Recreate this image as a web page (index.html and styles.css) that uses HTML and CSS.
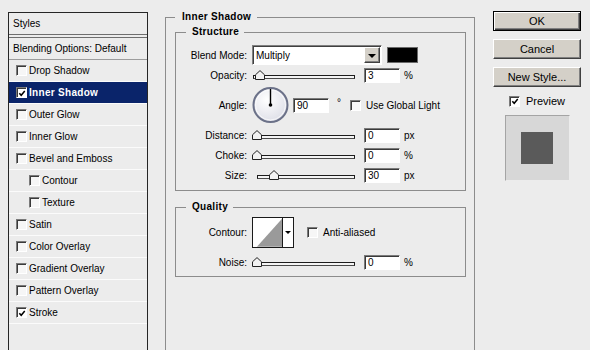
FILE: index.html
```html
<!DOCTYPE html>
<html lang="en">
<head>
<meta charset="UTF-8">
<title>Layer Style</title>
<link rel="stylesheet" href="styles.css">
</head>
<body>

<div class="dialog">

  <!-- Styles list -->
  <div class="styles-list">
    <div class="list-head">Styles</div>
    <div class="list-item blend">Blending Options: Default</div>
    <div class="list-item"><span class="check"></span>Drop Shadow</div>
    <div class="list-item selected"><span class="check on"><svg viewBox="0 0 9 9"><path d="M1.5 4.2 L3.6 6.5 L7.6 1.8"/></svg></span>Inner Shadow</div>
    <div class="list-item"><span class="check"></span>Outer Glow</div>
    <div class="list-item"><span class="check"></span>Inner Glow</div>
    <div class="list-item"><span class="check"></span>Bevel and Emboss</div>
    <div class="list-item sub"><span class="check"></span>Contour</div>
    <div class="list-item sub"><span class="check"></span>Texture</div>
    <div class="list-item"><span class="check"></span>Satin</div>
    <div class="list-item"><span class="check"></span>Color Overlay</div>
    <div class="list-item"><span class="check"></span>Gradient Overlay</div>
    <div class="list-item"><span class="check"></span>Pattern Overlay</div>
    <div class="list-item"><span class="check on"><svg viewBox="0 0 9 9"><path d="M1.5 4.2 L3.6 6.5 L7.6 1.8"/></svg></span>Stroke</div>
  </div>

  <!-- Settings -->
  <div class="settings">
    <fieldset class="group outer">
      <legend>Inner Shadow</legend>

      <fieldset class="group structure">
        <legend>Structure</legend>

        <div class="row first">
          <span class="label">Blend Mode:</span>
          <div class="select">Multiply<span class="arrow"></span></div>
          <span class="color-swatch"></span>
        </div>

        <div class="row">
          <span class="label">Opacity:</span>
          <div class="slider"><span class="track"></span><span class="thumb" style="left:2px"></span></div>
          <span class="field">3</span><span class="unit">%</span>
        </div>

        <div class="row angle">
          <span class="label">Angle:</span>
          <svg class="dial" width="38" height="40" viewBox="0 0 38 40">
            <defs>
              <radialGradient id="dialFill" cx="40%" cy="35%" r="70%">
                <stop offset="0" stop-color="#ffffff"/>
                <stop offset="1" stop-color="#dcdde6"/>
              </radialGradient>
            </defs>
            <circle cx="18.5" cy="20" r="17" fill="url(#dialFill)" stroke="#6b7188" stroke-width="2"/>
            <circle cx="18.5" cy="20" r="15" fill="none" stroke="#ffffff" stroke-width="1" opacity="0.7"/>
            <line x1="18.5" y1="20" x2="18.5" y2="4" stroke="#000" stroke-width="1.4"/>
            <circle cx="18.5" cy="20" r="1.8" fill="#000"/>
          </svg>
          <span class="field">90</span>
          <span class="degree">°</span>
          <span class="check global"></span><span class="check-text">Use Global Light</span>
        </div>

        <div class="row">
          <span class="label">Distance:</span>
          <div class="slider"><span class="track"></span><span class="thumb" style="left:-1px"></span></div>
          <span class="field">0</span><span class="unit">px</span>
        </div>

        <div class="row">
          <span class="label">Choke:</span>
          <div class="slider"><span class="track"></span><span class="thumb" style="left:-1px"></span></div>
          <span class="field">0</span><span class="unit">%</span>
        </div>

        <div class="row">
          <span class="label">Size:</span>
          <div class="slider short"><span class="track"></span><span class="thumb" style="left:16px"></span></div>
          <span class="field">30</span><span class="unit">px</span>
        </div>
      </fieldset>

      <fieldset class="group quality">
        <legend>Quality</legend>

        <div class="row contour-row">
          <span class="label">Contour:</span>
          <div class="contour">
            <svg class="curve" width="30" height="29" viewBox="0 0 30 29">
              <polygon points="4,29 30,0 30,29" fill="#9a9a9a"/>
            </svg>
            <span class="contour-arrow"></span>
          </div>
          <span class="check anti"></span><span class="check-text">Anti-aliased</span>
        </div>

        <div class="row noise">
          <span class="label">Noise:</span>
          <div class="slider"><span class="track"></span><span class="thumb" style="left:-1px"></span></div>
          <span class="field">0</span><span class="unit">%</span>
        </div>
      </fieldset>
    </fieldset>
  </div>

  <!-- Buttons and preview -->
  <div class="actions">
    <div class="btn default">OK</div>
    <div class="btn">Cancel</div>
    <div class="btn">New Style...</div>
    <div class="preview-toggle">
      <span class="check on"><svg viewBox="0 0 9 9"><path d="M1.5 4.2 L3.6 6.5 L7.6 1.8"/></svg></span>Preview
    </div>
    <div class="preview-box"><span class="preview-square"></span></div>
  </div>

</div>

</body>
</html>
```

FILE: styles.css
```css
/* Page */
body {
  margin: 0;
  background: #ececec;
  font-family: "Liberation Sans", Arial, sans-serif;
  font-size: 10px;
  color: #000;
}
.dialog {
  display: flex;
  align-items: flex-start;
  height: 350px;
  overflow: hidden;
}

/* Styles list */
.styles-list {
  flex: none;
  width: 140px;
  height: 400px;
  margin: 12px 0 0 8px;
  box-sizing: border-box;
  border: 1px solid #262626;
}
.list-head {
  height: 21px;
  line-height: 21px;
  padding-left: 4px;
  border-bottom: 1px solid #6e6e6e;
}
.list-item {
  display: flex;
  align-items: center;
  height: 21px;
  padding-left: 7px;
  border-bottom: 1px solid #fbfbfb;
}
.list-item.blend {
  margin-top: 2px;
  padding-left: 4px;
  border-top: 1px solid #6e6e6e;
  border-bottom-color: #9c9c9c;
}
.list-item.sub {
  padding-left: 20px;
}
.list-item.selected {
  background: #0a246a;
  color: #fff;
  font-weight: bold;
  letter-spacing: 0.3px;
}

/* Checkboxes */
.check {
  flex: none;
  display: inline-flex;
  align-items: center;
  justify-content: center;
  width: 11px;
  height: 11px;
  margin-right: 2px;
  box-sizing: border-box;
  border: 1px solid;
  border-color: #7a7a7a #fff #fff #7a7a7a;
  box-shadow: inset 1px 1px 0 #3a3a3a;
  background: #f6f6f6;
}
.check.on {
  background: #fff;
}
.check svg {
  width: 9px;
  height: 9px;
  margin: 1px 0 0 1px;
}
.check svg path {
  fill: none;
  stroke: #000;
  stroke-width: 1.7;
}
.check-text {
  margin-left: 5px;
}

/* Settings groups */
.settings {
  flex: none;
  width: 310px;
  margin: 11px 0 0 17px;
}
.group {
  margin: 0;
  padding: 0;
  min-width: 0;
  border: 1px solid #8c8c8c;
}
.group legend {
  font-weight: bold;
  line-height: 12px;
  letter-spacing: 0.3px;
}
.outer {
  box-sizing: border-box;
  width: 310px;
  height: 380px;
  padding: 0 8px 0 9px;
}
.outer > legend {
  padding: 0 6px 0 7px;
}
.structure {
  margin-top: 3px;
  padding-bottom: 5px;
}
.structure > legend,
.quality > legend {
  margin-left: 10px;
  padding: 0 5px 0 6px;
}
.quality {
  margin-top: 10px;
  padding-bottom: 4px;
}

/* Rows */
.row {
  display: flex;
  align-items: center;
  height: 20px;
}
.row.first {
  margin-top: 7px;
}
.row.angle {
  height: 40px;
}
.label {
  flex: none;
  width: 71px;
  margin-right: 5px;
  text-align: right;
}

/* Blend mode select */
.select {
  display: flex;
  align-items: center;
  box-sizing: border-box;
  width: 130px;
  height: 20px;
  padding-left: 3px;
  border: 1px solid;
  border-color: #808080 #fff #fff #808080;
  box-shadow: inset 1px 1px 0 #404040;
  background: #fff;
}
.select .arrow {
  display: flex;
  align-items: center;
  justify-content: center;
  box-sizing: border-box;
  width: 16px;
  height: 16px;
  margin-left: auto;
  margin-right: 1px;
  border: 1px solid;
  border-color: #fff #404040 #404040 #fff;
  box-shadow: inset -1px -1px 0 #808080;
  background: #d4d0c8;
}
.select .arrow::after {
  content: "";
  border-top: 4px solid #000;
  border-left: 4px solid transparent;
  border-right: 4px solid transparent;
  margin-top: 1px;
}
.color-swatch {
  width: 31px;
  height: 16px;
  margin-left: 5px;
  box-sizing: border-box;
  border: 1px solid #6a6a6a;
  background: #000;
}

/* Sliders */
.slider {
  position: relative;
  display: flex;
  align-items: center;
  width: 102px;
  height: 20px;
  margin-left: 1px;
}
.track {
  flex: 1;
  height: 2px;
  margin-top: 4px;
  border: 1px solid #1c1c1c;
  border-bottom-color: #4a4a4a;
  background: #f4f4f4;
}
.slider.short .track {
  margin-left: 4px;
}
.thumb {
  position: absolute;
  top: 5px;
  width: 10px;
  height: 10px;
  background: url("data:image/svg+xml,%3Csvg xmlns='http://www.w3.org/2000/svg' width='10' height='10'%3E%3Cpolygon points='0.5,9.5 0.5,4.8 5,0.6 9.5,4.8 9.5,9.5' fill='%23f2f2f2' stroke='%23222' stroke-width='1'/%3E%3C/svg%3E") no-repeat;
}

/* Number fields */
.field {
  box-sizing: border-box;
  width: 36px;
  height: 15px;
  margin-left: 9px;
  padding-left: 3px;
  line-height: 13px;
  border: 1px solid;
  border-color: #7b7b7b #fff #fff #7b7b7b;
  box-shadow: inset 1px 1px 0 #3a3a3a;
  background: #fff;
}
.unit {
  margin-left: 4px;
}
.dial {
  flex: none;
}
.row.angle .field {
  margin-left: 3px;
}
.degree {
  margin: 0 0 6px 8px;
}
.check.global {
  margin: 0 0 0 9px;
}

/* Quality */
.contour-row {
  height: 31px;
  margin-top: 4px;
}
.contour {
  display: flex;
  box-sizing: border-box;
  width: 42px;
  height: 31px;
  border: 1px solid #1a1a1a;
  background: #fff;
}
.contour-arrow {
  display: flex;
  align-items: center;
  justify-content: center;
  width: 10px;
  border-left: 1px solid #1a1a1a;
}
.contour-arrow::after {
  content: "";
  border-top: 3px solid #000;
  border-left: 3px solid transparent;
  border-right: 3px solid transparent;
}
.check.anti {
  margin: 0 0 0 13px;
}
.row.noise {
  margin-top: 4px;
}

/* Buttons and preview */
.actions {
  flex: none;
  display: flex;
  flex-direction: column;
  align-items: center;
  width: 88px;
  margin: 11px 0 0 18px;
}
.btn {
  box-sizing: border-box;
  width: 88px;
  height: 20px;
  margin-bottom: 8px;
  border: 1px solid;
  border-color: #fff #404040 #404040 #fff;
  box-shadow: inset -1px -1px 0 #808080;
  background: #d4d0c8;
  font-size: 11px;
  line-height: 18px;
  text-align: center;
}
.btn.default {
  border-color: #000;
  box-shadow: inset 1px 1px 0 #fff, inset -1px -1px 0 #404040, inset -2px -2px 0 #808080;
}
.preview-toggle {
  display: flex;
  align-items: center;
  height: 12px;
  font-size: 11px;
}
.preview-toggle .check {
  margin-right: 6px;
}
.preview-box {
  display: flex;
  align-items: center;
  justify-content: center;
  box-sizing: border-box;
  width: 65px;
  height: 66px;
  margin-top: 8px;
  border: 1px solid;
  border-color: #a4a4a4 #ececec #ececec #a4a4a4;
  background: #d7d7d7;
}
.preview-square {
  width: 32px;
  height: 32px;
  background: #5a5a5a;
}
```
